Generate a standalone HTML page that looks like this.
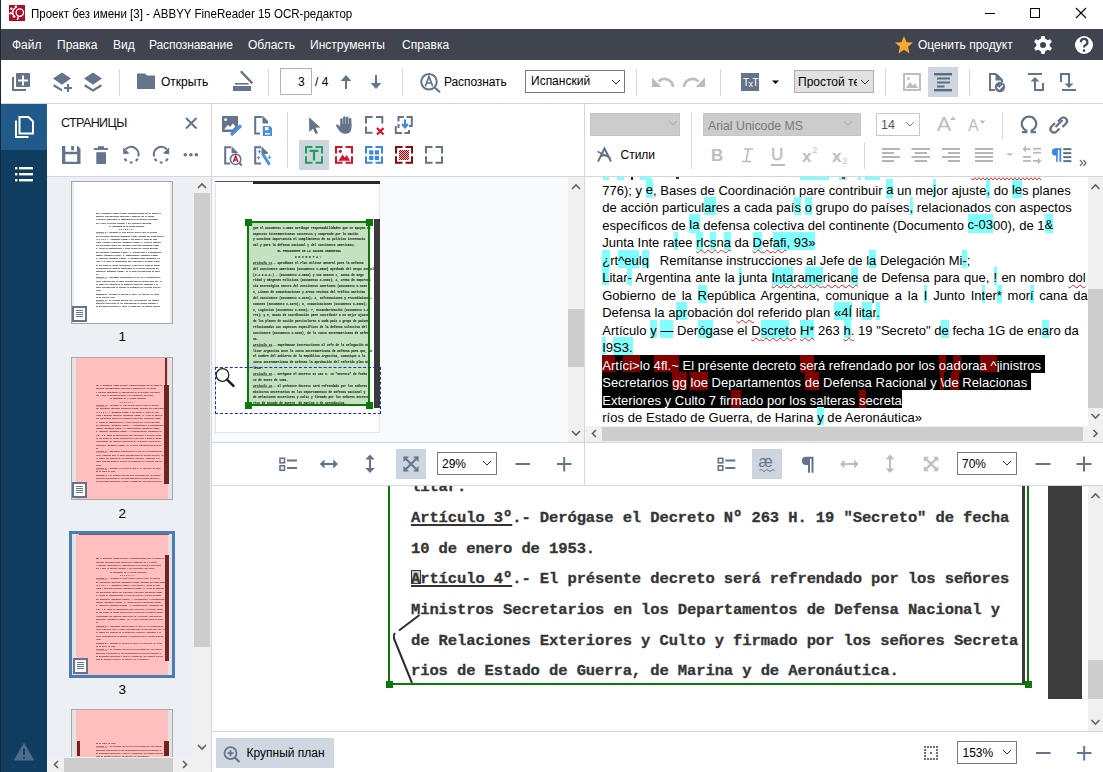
<!DOCTYPE html>
<html><head><meta charset="utf-8">
<style>
*{margin:0;padding:0;box-sizing:border-box}
html,body{width:1103px;height:772px;overflow:hidden;background:#fff;font-family:"Liberation Sans",sans-serif;color:#000}
.a{position:absolute}
.t{position:absolute;white-space:pre;line-height:1}
svg{position:absolute;overflow:visible}
.hl{background:#80ffff}
.dr{background:#800000}
.tl{position:absolute;white-space:pre;font-size:13px;line-height:17.53px;color:#000}
.tl span.hl,.tl span.dr,.tl span.bk{padding:3.1px 0 0 0}
.bk{background:#000;color:#fff}
.sq{text-decoration:underline wavy #e02020;text-decoration-thickness:0.5px;text-underline-offset:1.5px}
.sqc{text-decoration:underline wavy #30c0e0;text-decoration-thickness:0.5px;text-underline-offset:1.5px}
.doc{position:absolute;font-family:"Liberation Mono",monospace;font-weight:bold;font-size:15.5px;letter-spacing:-0.1px;color:#353535;-webkit-text-stroke:0.3px currentColor;width:700px;height:960px}
.dl{position:absolute;left:0;white-space:pre;line-height:30.7px}
.doc u{text-decoration-thickness:1.5px;text-underline-offset:2px}
</style></head><body>
<!-- window left border -->
<div class="a" style="left:0;top:0;width:1px;height:772px;background:#16283a"></div>

<!-- TITLE BAR -->

<div class="t" style="left:31px;top:7.5px;font-size:12.4px;transform:scaleX(0.93);transform-origin:0 0">Проект без имени [3] - ABBYY FineReader 15 OCR-редактор</div>

<!-- MENU BAR -->
<div class="a" style="left:1px;top:29px;width:1102px;height:31px;background:#40444f"></div>
<div class="t" style="left:12px;top:39px;font-size:12px;color:#fff">Файл</div>
<div class="t" style="left:57px;top:39px;font-size:12px;color:#fff">Правка</div>
<div class="t" style="left:113px;top:39px;font-size:12px;color:#fff">Вид</div>
<div class="t" style="left:149px;top:39px;font-size:12px;color:#fff;letter-spacing:-0.1px">Распознавание</div>
<div class="t" style="left:248px;top:39px;font-size:12px;color:#fff">Область</div>
<div class="t" style="left:310px;top:39px;font-size:12px;color:#fff">Инструменты</div>
<div class="t" style="left:402px;top:39px;font-size:12px;color:#fff">Справка</div>
<div class="t" style="left:918px;top:39px;font-size:12px;color:#fff">Оценить продукт</div>


<!-- TOOLBAR -->
<div class="a" style="left:1px;top:103px;width:1102px;height:1px;background:#cfd8e1"></div>

<!-- SIDEBAR -->
<div class="a" style="left:1px;top:104px;width:46px;height:668px;background:#0f3d5f"></div>
<div class="a" style="left:1px;top:104px;width:46px;height:46px;background:#1f5a8a"></div>

<!-- PAGES PANEL -->
<div class="a" style="left:47px;top:177px;width:164px;height:595px;background:#eceff3"></div>
<div class="a" style="left:47px;top:176px;width:164px;height:1px;background:#cfd8e1"></div>
<div class="a" style="left:211px;top:104px;width:1px;height:668px;background:#cfd8e1"></div>

<!-- pages panel header -->
<div class="t" style="left:61px;top:117px;font-size:12.5px;letter-spacing:-0.6px;color:#111">СТРАНИЦЫ</div>
<!-- thumbnails -->
<div class="a" style="left:71px;top:181px;width:102px;height:143px;border:1px solid #a8a8a8;background:#fff;overflow:hidden"><div class="a" style="left:0;top:0;width:2px;height:100%;background:#ececec"></div><div class="a" style="right:0;top:0;width:2px;height:100%;background:#ececec"></div><div class="a" style="left:24px;top:30px;width:68px;height:97px;overflow:hidden;filter:blur(0.5px)"><div class="doc" style="left:0;top:0;transform:scale(0.105);transform-origin:0 0;color:#3a3a3a;-webkit-text-stroke:0.8px #3a3a3a"><div class="dl" style="top:0.0px">Que el Documento C-0500 atribuye responsabilidades que se apoyan en</div>
<div class="dl" style="top:30.7px">aspectos interamericanos concretos y comprende por la Nación</div>
<div class="dl" style="top:61.4px">y contiene importancia el cumplimiento de su política internacio</div>
<div class="dl" style="top:92.1px">nal y para la defensa nacional y del Continente Americano;</div>
<div class="dl" style="top:122.8px">              EL PRESIDENTE DE LA NACION ARGENTINA</div>
<div class="dl" style="top:153.5px">                        D E C R E T A :</div>
<div class="dl" style="top:184.2px"><u>Artículo 1º</u>.- Apruébase el Plan Militar General para la Defensa</div>
<div class="dl" style="top:214.9px">del Continente Americano (Documento C-0500) aprobado del Grupo Consulta</div>
<div class="dl" style="top:245.6px">(C.J.I.D.A.) - (Documento C-0500) y sus anexos 1, Zonas de Segu</div>
<div class="dl" style="top:276.3px">ridad y Márgenes Políticas (Documento C-0300); 2, Areas de Importan</div>
<div class="dl" style="top:307.0px">cia Estratégica Dentro del Continente Americano (Documento C-0300</div>
<div class="dl" style="top:337.7px">3, Líneas de Comunicaciones y Areas Vecinas del Tráfico Marítimo</div>
<div class="dl" style="top:368.4px">del Continente (Documento C-0270); 4, Informaciones y Procedimiento-</div>
<div class="dl" style="top:399.1px">comunes (Documento C-0270); 5, Comunicaciones (Documento C-0300);</div>
<div class="dl" style="top:429.8px">6, Logística (Documento C-0300); 7, Estandarización (Documento C-0</div>
<div class="dl" style="top:460.5px">776); y 8, Bases de Coordinación pare contribuir a un mejor ajuste</div>
<div class="dl" style="top:491.2px">de los planes de acción particulares a cada país o grupo de países</div>
<div class="dl" style="top:521.9px">relacionados con aspectos específicos de la defensa colectiva del</div>
<div class="dl" style="top:552.6px">continente (Documento C-0300), de la Junta Interamericana de Defen</div>
<div class="dl" style="top:583.3px">sa.</div>
<div class="dl" style="top:614.0px"><u>Artículo 2º</u>.- Imprímanse instrucciones al Jefe de la Delegación Mi-</div>
<div class="dl" style="top:644.7px">litar Argentina ante la Junta Interamericana de Defensa para que, en</div>
<div class="dl" style="top:675.4px">el nombre del Gobierno de la República Argentina, comunique a la</div>
<div class="dl" style="top:706.1px">Junta Interamericana de Defensa la aprobación del referido plan mi-</div>
<div class="dl" style="top:736.8px">litar.</div>
<div class="dl" style="top:767.5px"><u>Artículo 3º</u>.- Derógase el Decreto Nº 263 H. 19 &quot;Secreto&quot; de fecha</div>
<div class="dl" style="top:798.2px">10 de enero de 1953.</div>
<div class="dl" style="top:828.9px"><u>Artículo 4º</u>.- El présente decreto será refrendado por los señores</div>
<div class="dl" style="top:859.6px">Ministros Secretarios en los Departamentos de Defensa Nacional y</div>
<div class="dl" style="top:890.3px">de Relaciones Exteriores y Culto y firmado por los señores Secreta</div>
<div class="dl" style="top:921.0px">rios de Estado de Guerra, de Marina y de Aeronáutica.</div></div></div></div><div class="a" style="left:72px;top:306px;width:15px;height:16px;background:#64748a"><div class="a" style="left:2px;top:2px;width:11px;height:12px;background:#fff"></div><div class="a" style="left:4px;top:4px;width:7px;height:1px;background:#64748a;box-shadow:0 2px 0 #64748a,0 4px 0 #64748a,0 6px 0 #64748a"></div></div>
<div class="t" style="left:118.5px;top:330.3px;font-size:13.5px">1</div>
<div class="a" style="left:71px;top:357px;width:102px;height:143px;border:1px solid #a8a8a8;background:#ffbfbf;overflow:hidden"><div class="a" style="left:0;top:0;width:4px;height:100%;background:#e3e3e3"></div><div class="a" style="right:0;top:0;width:4px;height:100%;background:#e3e3e3"></div><div class="a" style="left:24px;top:26px;width:68px;height:101px;overflow:hidden;filter:blur(0.2px)"><div class="doc" style="left:0;top:0;transform:scale(0.108);transform-origin:0 0;color:#6a2020;-webkit-text-stroke:0.3px #6a2020"><div class="dl" style="top:0.0px">Que el Documento C-0500 atribuye responsabilidades que se apoyan en</div>
<div class="dl" style="top:30.7px">aspectos interamericanos concretos y comprende por la Nación</div>
<div class="dl" style="top:61.4px">y contiene importancia el cumplimiento de su política internacio</div>
<div class="dl" style="top:92.1px">nal y para la defensa nacional y del Continente Americano;</div>
<div class="dl" style="top:122.8px">              EL PRESIDENTE DE LA NACION ARGENTINA</div>
<div class="dl" style="top:153.5px">                        D E C R E T A :</div>
<div class="dl" style="top:184.2px"><u>Artículo 1º</u>.- Apruébase el Plan Militar General para la Defensa</div>
<div class="dl" style="top:214.9px">del Continente Americano (Documento C-0500) aprobado del Grupo Consulta</div>
<div class="dl" style="top:245.6px">(C.J.I.D.A.) - (Documento C-0500) y sus anexos 1, Zonas de Segu</div>
<div class="dl" style="top:276.3px">ridad y Márgenes Políticas (Documento C-0300); 2, Areas de Importan</div>
<div class="dl" style="top:307.0px">cia Estratégica Dentro del Continente Americano (Documento C-0300</div>
<div class="dl" style="top:337.7px">3, Líneas de Comunicaciones y Areas Vecinas del Tráfico Marítimo</div>
<div class="dl" style="top:368.4px">del Continente (Documento C-0270); 4, Informaciones y Procedimiento-</div>
<div class="dl" style="top:399.1px">comunes (Documento C-0270); 5, Comunicaciones (Documento C-0300);</div>
<div class="dl" style="top:429.8px">6, Logística (Documento C-0300); 7, Estandarización (Documento C-0</div>
<div class="dl" style="top:460.5px">776); y 8, Bases de Coordinación pare contribuir a un mejor ajuste</div>
<div class="dl" style="top:491.2px">de los planes de acción particulares a cada país o grupo de países</div>
<div class="dl" style="top:521.9px">relacionados con aspectos específicos de la defensa colectiva del</div>
<div class="dl" style="top:552.6px">continente (Documento C-0300), de la Junta Interamericana de Defen</div>
<div class="dl" style="top:583.3px">sa.</div>
<div class="dl" style="top:614.0px"><u>Artículo 2º</u>.- Imprímanse instrucciones al Jefe de la Delegación Mi-</div>
<div class="dl" style="top:644.7px">litar Argentina ante la Junta Interamericana de Defensa para que, en</div>
<div class="dl" style="top:675.4px">el nombre del Gobierno de la República Argentina, comunique a la</div>
<div class="dl" style="top:706.1px">Junta Interamericana de Defensa la aprobación del referido plan mi-</div>
<div class="dl" style="top:736.8px">litar.</div>
<div class="dl" style="top:767.5px"><u>Artículo 3º</u>.- Derógase el Decreto Nº 263 H. 19 &quot;Secreto&quot; de fecha</div>
<div class="dl" style="top:798.2px">10 de enero de 1953.</div>
<div class="dl" style="top:828.9px"><u>Artículo 4º</u>.- El présente decreto será refrendado por los señores</div>
<div class="dl" style="top:859.6px">Ministros Secretarios en los Departamentos de Defensa Nacional y</div>
<div class="dl" style="top:890.3px">de Relaciones Exteriores y Culto y firmado por los señores Secreta</div>
<div class="dl" style="top:921.0px">rios de Estado de Guerra, de Marina y de Aeronáutica.</div></div></div><div class="a" style="left:93px;top:0;width:2px;height:27px;background:#7a2a2a"></div><div class="a" style="left:92px;top:27px;width:5px;height:99px;background:#6e2424"></div></div><div class="a" style="left:72px;top:482px;width:15px;height:16px;background:#64748a"><div class="a" style="left:2px;top:2px;width:11px;height:12px;background:#fff"></div><div class="a" style="left:4px;top:4px;width:7px;height:1px;background:#64748a;box-shadow:0 2px 0 #64748a,0 4px 0 #64748a,0 6px 0 #64748a"></div></div>
<div class="t" style="left:118.5px;top:507px;font-size:13.5px">2</div>
<div class="a" style="left:69px;top:531px;width:106px;height:147px;border:3px solid #4a7db8;background:#ffbfbf;overflow:hidden"><div class="a" style="left:0;top:0;width:4px;height:100%;background:#e3e3e3"></div><div class="a" style="right:0;top:0;width:4px;height:100%;background:#e3e3e3"></div><div class="a" style="left:7px;top:0;width:90px;height:1px;background:#a05050"></div><div class="a" style="left:24px;top:23px;width:69px;height:104px;overflow:hidden;filter:blur(0.2px)"><div class="doc" style="left:0;top:0;transform:scale(0.11);transform-origin:0 0;color:#6a2020;-webkit-text-stroke:0.3px #6a2020"><div class="dl" style="top:0.0px">Que el Documento C-0500 atribuye responsabilidades que se apoyan en</div>
<div class="dl" style="top:30.7px">aspectos interamericanos concretos y comprende por la Nación</div>
<div class="dl" style="top:61.4px">y contiene importancia el cumplimiento de su política internacio</div>
<div class="dl" style="top:92.1px">nal y para la defensa nacional y del Continente Americano;</div>
<div class="dl" style="top:122.8px">              EL PRESIDENTE DE LA NACION ARGENTINA</div>
<div class="dl" style="top:153.5px">                        D E C R E T A :</div>
<div class="dl" style="top:184.2px"><u>Artículo 1º</u>.- Apruébase el Plan Militar General para la Defensa</div>
<div class="dl" style="top:214.9px">del Continente Americano (Documento C-0500) aprobado del Grupo Consulta</div>
<div class="dl" style="top:245.6px">(C.J.I.D.A.) - (Documento C-0500) y sus anexos 1, Zonas de Segu</div>
<div class="dl" style="top:276.3px">ridad y Márgenes Políticas (Documento C-0300); 2, Areas de Importan</div>
<div class="dl" style="top:307.0px">cia Estratégica Dentro del Continente Americano (Documento C-0300</div>
<div class="dl" style="top:337.7px">3, Líneas de Comunicaciones y Areas Vecinas del Tráfico Marítimo</div>
<div class="dl" style="top:368.4px">del Continente (Documento C-0270); 4, Informaciones y Procedimiento-</div>
<div class="dl" style="top:399.1px">comunes (Documento C-0270); 5, Comunicaciones (Documento C-0300);</div>
<div class="dl" style="top:429.8px">6, Logística (Documento C-0300); 7, Estandarización (Documento C-0</div>
<div class="dl" style="top:460.5px">776); y 8, Bases de Coordinación pare contribuir a un mejor ajuste</div>
<div class="dl" style="top:491.2px">de los planes de acción particulares a cada país o grupo de países</div>
<div class="dl" style="top:521.9px">relacionados con aspectos específicos de la defensa colectiva del</div>
<div class="dl" style="top:552.6px">continente (Documento C-0300), de la Junta Interamericana de Defen</div>
<div class="dl" style="top:583.3px">sa.</div>
<div class="dl" style="top:614.0px"><u>Artículo 2º</u>.- Imprímanse instrucciones al Jefe de la Delegación Mi-</div>
<div class="dl" style="top:644.7px">litar Argentina ante la Junta Interamericana de Defensa para que, en</div>
<div class="dl" style="top:675.4px">el nombre del Gobierno de la República Argentina, comunique a la</div>
<div class="dl" style="top:706.1px">Junta Interamericana de Defensa la aprobación del referido plan mi-</div>
<div class="dl" style="top:736.8px">litar.</div>
<div class="dl" style="top:767.5px"><u>Artículo 3º</u>.- Derógase el Decreto Nº 263 H. 19 &quot;Secreto&quot; de fecha</div>
<div class="dl" style="top:798.2px">10 de enero de 1953.</div>
<div class="dl" style="top:828.9px"><u>Artículo 4º</u>.- El présente decreto será refrendado por los señores</div>
<div class="dl" style="top:859.6px">Ministros Secretarios en los Departamentos de Defensa Nacional y</div>
<div class="dl" style="top:890.3px">de Relaciones Exteriores y Culto y firmado por los señores Secreta</div>
<div class="dl" style="top:921.0px">rios de Estado de Guerra, de Marina y de Aeronáutica.</div></div></div><div class="a" style="left:93px;top:21px;width:4px;height:106px;background:#6e2424"></div></div><div class="a" style="left:73px;top:658px;width:15px;height:16px;background:#64748a"><div class="a" style="left:2px;top:2px;width:11px;height:12px;background:#fff"></div><div class="a" style="left:4px;top:4px;width:7px;height:1px;background:#64748a;box-shadow:0 2px 0 #64748a,0 4px 0 #64748a,0 6px 0 #64748a"></div></div>
<div class="t" style="left:118.5px;top:682.5px;font-size:13.5px">3</div>
<div class="a" style="left:71px;top:709px;width:102px;height:60px;border:1px solid #a8a8a8;background:#ffbfbf;overflow:hidden"><div class="a" style="left:0;top:0;width:4px;height:100%;background:#e3e3e3"></div><div class="a" style="right:0;top:0;width:4px;height:100%;background:#e3e3e3"></div><div class="a" style="left:24px;top:33px;width:68px;height:14px;overflow:hidden;filter:blur(0.2px)"><div class="doc" style="left:0;top:-89px;transform:scale(0.11);transform-origin:0 0;color:#6a2020;-webkit-text-stroke:0.3px #6a2020"><div class="dl" style="top:0.0px">Que el Documento C-0500 atribuye responsabilidades que se apoyan en</div>
<div class="dl" style="top:30.7px">aspectos interamericanos concretos y comprende por la Nación</div>
<div class="dl" style="top:61.4px">y contiene importancia el cumplimiento de su política internacio</div>
<div class="dl" style="top:92.1px">nal y para la defensa nacional y del Continente Americano;</div>
<div class="dl" style="top:122.8px">              EL PRESIDENTE DE LA NACION ARGENTINA</div>
<div class="dl" style="top:153.5px">                        D E C R E T A :</div>
<div class="dl" style="top:184.2px"><u>Artículo 1º</u>.- Apruébase el Plan Militar General para la Defensa</div>
<div class="dl" style="top:214.9px">del Continente Americano (Documento C-0500) aprobado del Grupo Consulta</div>
<div class="dl" style="top:245.6px">(C.J.I.D.A.) - (Documento C-0500) y sus anexos 1, Zonas de Segu</div>
<div class="dl" style="top:276.3px">ridad y Márgenes Políticas (Documento C-0300); 2, Areas de Importan</div>
<div class="dl" style="top:307.0px">cia Estratégica Dentro del Continente Americano (Documento C-0300</div>
<div class="dl" style="top:337.7px">3, Líneas de Comunicaciones y Areas Vecinas del Tráfico Marítimo</div>
<div class="dl" style="top:368.4px">del Continente (Documento C-0270); 4, Informaciones y Procedimiento-</div>
<div class="dl" style="top:399.1px">comunes (Documento C-0270); 5, Comunicaciones (Documento C-0300);</div>
<div class="dl" style="top:429.8px">6, Logística (Documento C-0300); 7, Estandarización (Documento C-0</div>
<div class="dl" style="top:460.5px">776); y 8, Bases de Coordinación pare contribuir a un mejor ajuste</div>
<div class="dl" style="top:491.2px">de los planes de acción particulares a cada país o grupo de países</div>
<div class="dl" style="top:521.9px">relacionados con aspectos específicos de la defensa colectiva del</div>
<div class="dl" style="top:552.6px">continente (Documento C-0300), de la Junta Interamericana de Defen</div>
<div class="dl" style="top:583.3px">sa.</div>
<div class="dl" style="top:614.0px"><u>Artículo 2º</u>.- Imprímanse instrucciones al Jefe de la Delegación Mi-</div>
<div class="dl" style="top:644.7px">litar Argentina ante la Junta Interamericana de Defensa para que, en</div>
<div class="dl" style="top:675.4px">el nombre del Gobierno de la República Argentina, comunique a la</div>
<div class="dl" style="top:706.1px">Junta Interamericana de Defensa la aprobación del referido plan mi-</div>
<div class="dl" style="top:736.8px">litar.</div>
<div class="dl" style="top:767.5px"><u>Artículo 3º</u>.- Derógase el Decreto Nº 263 H. 19 &quot;Secreto&quot; de fecha</div>
<div class="dl" style="top:798.2px">10 de enero de 1953.</div>
<div class="dl" style="top:828.9px"><u>Artículo 4º</u>.- El présente decreto será refrendado por los señores</div>
<div class="dl" style="top:859.6px">Ministros Secretarios en los Departamentos de Defensa Nacional y</div>
<div class="dl" style="top:890.3px">de Relaciones Exteriores y Culto y firmado por los señores Secreta</div>
<div class="dl" style="top:921.0px">rios de Estado de Guerra, de Marina y de Aeronáutica.</div></div></div><div class="a" style="left:5px;top:31px;width:3px;height:15px;background:#6e2424"></div><div class="a" style="left:92px;top:31px;width:5px;height:15px;background:#6e2424"></div></div>
<!-- pages scrollbars -->
<div class="a" style="left:194px;top:177px;width:16px;height:580px;background:#f0f0f0"></div>
<div class="a" style="left:194px;top:193px;width:16px;height:454px;background:#cdcdcd"></div>
<div class="a" style="left:47px;top:757px;width:147px;height:15px;background:#f0f0f0"></div>
<div class="a" style="left:64px;top:758px;width:109px;height:14px;background:#cdcdcd"></div>
<div class="a" style="left:194px;top:757px;width:17px;height:15px;background:#f0f0f0"></div>
<!-- image panel -->
<div class="a" style="left:212px;top:176px;width:891px;height:1px;background:#cfd8e1"></div>
<div class="a" style="left:212px;top:177px;width:372px;height:265px;background:#f7f8fa"></div>
<div class="a" style="left:584px;top:104px;width:1px;height:381px;background:#cfd8e1"></div>
<!-- IMAGE VIEW -->
<div class="a" style="left:212px;top:177px;width:356px;height:265px;overflow:hidden;background:#f9fafc">
 <div class="a" style="left:3px;top:4px;width:165px;height:252px;background:#fff;border:1px solid #e2e4e8"></div>
 <div class="a" style="left:3px;top:4px;width:165px;height:3px;background:#2a2a2a"></div>
 <div class="a" style="left:3px;top:5px;width:38px;height:2px;background:#fff"></div><div class="a" style="left:3px;top:4px;width:38px;height:1px;background:#555"></div>
 <div class="a" style="left:36.5px;top:45px;width:121.5px;height:183.5px;background:#c4e1c0"></div>
 <div class="doc" style="left:41px;top:47.6px;transform:scale(0.1906);transform-origin:0 0;color:#2a3a2a;-webkit-text-stroke:0.6px #2a3a2a"><div class="dl" style="top:0.0px">Que el Documento C-0500 atribuye responsabilidades que se apoyan en</div>
<div class="dl" style="top:30.7px">aspectos interamericanos concretos y comprende por la Nación</div>
<div class="dl" style="top:61.4px">y contiene importancia el cumplimiento de su política internacio</div>
<div class="dl" style="top:92.1px">nal y para la defensa nacional y del Continente Americano;</div>
<div class="dl" style="top:122.8px">              EL PRESIDENTE DE LA NACION ARGENTINA</div>
<div class="dl" style="top:153.5px">                        D E C R E T A :</div>
<div class="dl" style="top:184.2px"><u>Artículo 1º</u>.- Apruébase el Plan Militar General para la Defensa</div>
<div class="dl" style="top:214.9px">del Continente Americano (Documento C-0500) aprobado del Grupo Consulta</div>
<div class="dl" style="top:245.6px">(C.J.I.D.A.) - (Documento C-0500) y sus anexos 1, Zonas de Segu</div>
<div class="dl" style="top:276.3px">ridad y Márgenes Políticas (Documento C-0300); 2, Areas de Importan</div>
<div class="dl" style="top:307.0px">cia Estratégica Dentro del Continente Americano (Documento C-0300</div>
<div class="dl" style="top:337.7px">3, Líneas de Comunicaciones y Areas Vecinas del Tráfico Marítimo</div>
<div class="dl" style="top:368.4px">del Continente (Documento C-0270); 4, Informaciones y Procedimiento-</div>
<div class="dl" style="top:399.1px">comunes (Documento C-0270); 5, Comunicaciones (Documento C-0300);</div>
<div class="dl" style="top:429.8px">6, Logística (Documento C-0300); 7, Estandarización (Documento C-0</div>
<div class="dl" style="top:460.5px">776); y 8, Bases de Coordinación pare contribuir a un mejor ajuste</div>
<div class="dl" style="top:491.2px">de los planes de acción particulares a cada país o grupo de países</div>
<div class="dl" style="top:521.9px">relacionados con aspectos específicos de la defensa colectiva del</div>
<div class="dl" style="top:552.6px">continente (Documento C-0300), de la Junta Interamericana de Defen</div>
<div class="dl" style="top:583.3px">sa.</div>
<div class="dl" style="top:614.0px"><u>Artículo 2º</u>.- Imprímanse instrucciones al Jefe de la Delegación Mi-</div>
<div class="dl" style="top:644.7px">litar Argentina ante la Junta Interamericana de Defensa para que, en</div>
<div class="dl" style="top:675.4px">el nombre del Gobierno de la República Argentina, comunique a la</div>
<div class="dl" style="top:706.1px">Junta Interamericana de Defensa la aprobación del referido plan mi-</div>
<div class="dl" style="top:736.8px">litar.</div>
<div class="dl" style="top:767.5px"><u>Artículo 3º</u>.- Derógase el Decreto Nº 263 H. 19 &quot;Secreto&quot; de fecha</div>
<div class="dl" style="top:798.2px">10 de enero de 1953.</div>
<div class="dl" style="top:828.9px"><u>Artículo 4º</u>.- El présente decreto será refrendado por los señores</div>
<div class="dl" style="top:859.6px">Ministros Secretarios en los Departamentos de Defensa Nacional y</div>
<div class="dl" style="top:890.3px">de Relaciones Exteriores y Culto y firmado por los señores Secreta</div>
<div class="dl" style="top:921.0px">rios de Estado de Guerra, de Marina y de Aeronáutica.</div></div>
 <div class="a" style="left:35px;top:44px;width:123px;height:184.5px;border:2px solid #0a7a0a"></div>
 <div class="a" style="left:33px;top:42px;width:7px;height:7px;background:#0a7a0a"></div>
 <div class="a" style="left:154px;top:42px;width:7px;height:7px;background:#0a7a0a"></div>
 <div class="a" style="left:33px;top:225px;width:7px;height:7px;background:#0a7a0a"></div>
 <div class="a" style="left:154px;top:225px;width:7px;height:7px;background:#0a7a0a"></div>
 <div class="a" style="left:162px;top:42px;width:6px;height:189px;background:#3a3a3a"></div>
 <div class="a" style="left:3px;top:190px;width:166px;height:47px;border:1.5px dashed #1030e0"></div>
</div>
<div class="a" style="left:568px;top:177px;width:16px;height:265px;background:#f0f0f0"></div>
<div class="a" style="left:568px;top:309px;width:16px;height:58px;background:#cdcdcd"></div>
<!-- ZOOM TOOLBARS -->
<div class="a" style="left:396px;top:449px;width:30px;height:30px;background:#cdd6e0"></div>
<div class="a" style="left:437px;top:452px;width:60px;height:23px;border:1px solid #7a7a7a;background:#fff"></div>
<div class="t" style="left:442px;top:458px;font-size:12px">29%</div>
<div class="a" style="left:752px;top:449px;width:30px;height:30px;background:#cdd6e0"></div>
<div class="a" style="left:957px;top:452px;width:60px;height:23px;border:1px solid #7a7a7a;background:#fff"></div>
<div class="t" style="left:962px;top:458px;font-size:12px">70%</div>
<!-- BOTTOM VIEW -->
<div class="a" style="left:212px;top:486px;width:876px;height:245px;overflow:hidden;background:#fff">
 <div class="a" style="left:199px;top:84px;width:10px;height:14px;background:#d8d480;border:1px solid #2a2ad0"></div>
 <div class="doc" style="left:199px;top:-750.7px"><div class="dl" style="top:0.0px">Que el Documento C-0500 atribuye responsabilidades que se apoyan en</div>
<div class="dl" style="top:30.7px">aspectos interamericanos concretos y comprende por la Nación</div>
<div class="dl" style="top:61.4px">y contiene importancia el cumplimiento de su política internacio</div>
<div class="dl" style="top:92.1px">nal y para la defensa nacional y del Continente Americano;</div>
<div class="dl" style="top:122.8px">              EL PRESIDENTE DE LA NACION ARGENTINA</div>
<div class="dl" style="top:153.5px">                        D E C R E T A :</div>
<div class="dl" style="top:184.2px"><u>Artículo 1º</u>.- Apruébase el Plan Militar General para la Defensa</div>
<div class="dl" style="top:214.9px">del Continente Americano (Documento C-0500) aprobado del Grupo Consulta</div>
<div class="dl" style="top:245.6px">(C.J.I.D.A.) - (Documento C-0500) y sus anexos 1, Zonas de Segu</div>
<div class="dl" style="top:276.3px">ridad y Márgenes Políticas (Documento C-0300); 2, Areas de Importan</div>
<div class="dl" style="top:307.0px">cia Estratégica Dentro del Continente Americano (Documento C-0300</div>
<div class="dl" style="top:337.7px">3, Líneas de Comunicaciones y Areas Vecinas del Tráfico Marítimo</div>
<div class="dl" style="top:368.4px">del Continente (Documento C-0270); 4, Informaciones y Procedimiento-</div>
<div class="dl" style="top:399.1px">comunes (Documento C-0270); 5, Comunicaciones (Documento C-0300);</div>
<div class="dl" style="top:429.8px">6, Logística (Documento C-0300); 7, Estandarización (Documento C-0</div>
<div class="dl" style="top:460.5px">776); y 8, Bases de Coordinación pare contribuir a un mejor ajuste</div>
<div class="dl" style="top:491.2px">de los planes de acción particulares a cada país o grupo de países</div>
<div class="dl" style="top:521.9px">relacionados con aspectos específicos de la defensa colectiva del</div>
<div class="dl" style="top:552.6px">continente (Documento C-0300), de la Junta Interamericana de Defen</div>
<div class="dl" style="top:583.3px">sa.</div>
<div class="dl" style="top:614.0px"><u>Artículo 2º</u>.- Imprímanse instrucciones al Jefe de la Delegación Mi-</div>
<div class="dl" style="top:644.7px">litar Argentina ante la Junta Interamericana de Defensa para que, en</div>
<div class="dl" style="top:675.4px">el nombre del Gobierno de la República Argentina, comunique a la</div>
<div class="dl" style="top:706.1px">Junta Interamericana de Defensa la aprobación del referido plan mi-</div>
<div class="dl" style="top:736.8px">litar.</div>
<div class="dl" style="top:767.5px"><u>Artículo 3º</u>.- Derógase el Decreto Nº 263 H. 19 &quot;Secreto&quot; de fecha</div>
<div class="dl" style="top:798.2px">10 de enero de 1953.</div>
<div class="dl" style="top:828.9px"><u>Artículo 4º</u>.- El présente decreto será refrendado por los señores</div>
<div class="dl" style="top:859.6px">Ministros Secretarios en los Departamentos de Defensa Nacional y</div>
<div class="dl" style="top:890.3px">de Relaciones Exteriores y Culto y firmado por los señores Secreta</div>
<div class="dl" style="top:921.0px">rios de Estado de Guerra, de Marina y de Aeronáutica.</div></div>
 <div class="a" style="left:176px;top:0;width:2px;height:199px;background:#0a7a0a"></div>
 <div class="a" style="left:815px;top:0;width:2px;height:199px;background:#0a7a0a"></div>
 <div class="a" style="left:176px;top:197px;width:641px;height:2px;background:#0a7a0a"></div>
 <div class="a" style="left:174px;top:195px;width:7px;height:7px;background:#0a7a0a"></div>
 <div class="a" style="left:813px;top:195px;width:7px;height:7px;background:#0a7a0a"></div>
 <div class="a" style="left:810px;top:0;width:2.5px;height:197px;background:#3c3c3c"></div>
 <div class="a" style="left:836px;top:0;width:34px;height:213px;background:#3c3c3c"></div>
</div>
<div class="a" style="left:1088px;top:486px;width:15px;height:245px;background:#f0f0f0"></div>
<div class="a" style="left:1088px;top:660px;width:15px;height:39px;background:#cdcdcd"></div>
<!-- BOTTOM TOOLBAR -->
<div class="a" style="left:216px;top:738px;width:118px;height:30px;background:#cfd7e0"></div>
<div class="t" style="left:246.5px;top:747px;font-size:12px">Крупный план</div>
<div class="a" style="left:957px;top:741px;width:60px;height:23px;border:1px solid #7a7a7a;background:#fff"></div>
<div class="t" style="left:962.5px;top:747px;font-size:12px">153%</div>
<!-- TEXT PANEL -->
<div class="a" style="left:585px;top:177px;width:503px;height:249px;overflow:hidden;background:#fff">
<div class="a" style="left:17.6px;top:0;width:6px;height:2.9px;background:#80ffff"></div>
<div class="a" style="left:31.8px;top:0;width:7.6px;height:2.9px;background:#80ffff"></div>
<div class="a" style="left:54.6px;top:0;width:11px;height:2.9px;background:#80ffff"></div>
<div class="a" style="left:214.5px;top:0;width:29.5px;height:2.9px;background:#80ffff"></div>
<div class="a" style="left:279.7px;top:0;width:15px;height:2.9px;background:#80ffff"></div><div class="a" style="left:254.4px;top:0;width:7.6px;height:2.9px;background:#80ffff"></div><div class="a" style="left:272.8px;top:0;width:3.7px;height:2.9px;background:#80ffff"></div><div class="a" style="left:46px;top:0;width:2px;height:2.5px;background:#222"></div><div class="a" style="left:91px;top:0;width:3px;height:2px;background:#333"></div><div class="a" style="left:257px;top:0;width:3px;height:2px;background:#c02020"></div>
<div class="tl" style="left:17.2px;top:4.50px;letter-spacing:0.029px;word-spacing:0px">776); y <span class="hl">e</span>, Bases de Coordinación pare contribuir <span class="hl">a</span> un me<span class="hl">j</span>or ajuste<span class="hl">,</span> do <span class="hl">le</span>s planes</div>
<div class="tl" style="left:17.2px;top:22.03px;letter-spacing:0.044px;word-spacing:0px">de acción particul<span class="hl">ar</span>es a cada paí<span class="hl">s</span> <span class="hl">o</span> grupo do países<span class="hl">,</span> relacionados con aspectos</div>
<div class="tl" style="left:17.2px;top:39.56px;letter-spacing:0.03px;word-spacing:0px">específicos de <span class="hl">la</span> defensa colectiva del continente (Documento <span class="hl">c-03</span>00), de 1<span class="hl">&amp;</span></div>
<div class="tl" style="left:17.2px;top:57.09px;letter-spacing:0px;word-spacing:0px">Junta Inte ra<span class="hl">t</span>ee <span class="sq"><span class="hl">rl</span>c<span class="hl">s</span>n<span class="hl">a</span></span> da <span class="sq"><span class="hl">D</span>ef<span class="hl">afi</span></span><span class="hl">, 93»</span></div>
<div class="tl" style="left:17.2px;top:74.62px;letter-spacing:0.013px;word-spacing:0px"><span class="hl">¿</span>rt<span class="hl">^eu</span>l<span class="hl">q</span>   Remítanse instrucciones al Jefe de l<span class="hl">a</span> Delegación Mi<span class="hl">-</span>;</div>
<div class="tl" style="left:17.2px;top:92.15px;letter-spacing:0.0px;word-spacing:0.61px"><span class="hl">L</span>itar<span class="hl">-</span> Argentina ante la <span class="hl">j</span>unta <span class="sq"><span class="hl">Inta</span>ra<span class="hl">me</span>rican<span class="hl">e</span></span> de Defensa para que, <span class="hl">!</span> en nombro <span class="sq">dol</span></div>
<div class="tl" style="left:17.2px;top:109.68px;letter-spacing:0.0px;word-spacing:2.16px">Gobierno de la <span class="hl">R</span>epública Argentina, comunique a la <span class="hl">I</span> Junto In<span class="hl">t</span>er<span class="hl">*</span> mor<span class="hl">í</span> cana da</div>
<div class="tl" style="left:17.2px;top:127.21px;letter-spacing:0.029px;word-spacing:0px">Defensa la a<span class="hl">pr</span>obación <span class="sq">dol</span> referido plan <span class="hl">«4Í</span> li<span class="hl">ta</span>r<span class="hl">.</span></div>
<div class="tl" style="left:17.2px;top:144.74px;letter-spacing:0.033px;word-spacing:0px">Artículo <span class="hl">y</span> <span class="hl">—</span> Der<span class="hl">óg</span>ase el <span class="sq">D<span class="hl">scret</span>o</span> <span class="sq"><span class="hl">H*</span></span> 263 <span class="sq"><span class="hl">h</span>.</span> 19 &quot;Secreto&quot; d<span class="hl">e</span> fecha 1G de en<span class="hl">a</span>ro da</div>
<div class="tl" style="left:17.2px;top:162.27px;letter-spacing:0px;word-spacing:0px"><span class="hl">I</span>9<span class="hl">S3.</span></div>
<div class="tl sel" style="left:17.2px;top:179.80px;letter-spacing:0.045px;word-spacing:0px"><span class="bk"><span class="dr">Ar</span>tí<span class="dr">ci&gt;</span>lo <span class="dr">4fl.~</span> El présente decreto <span class="dr">se</span>rá refrendado por los <span class="sqc"><span class="dr">o</span>a<span class="dr">d</span>ora</span><span class="dr">a ^</span>jinistros </span></div>
<div class="tl sel" style="left:17.2px;top:197.33px;letter-spacing:0.052px;word-spacing:0px"><span class="bk">Secretarios <span class="sqc"><span class="dr">gg</span></span> <span class="dr">loe</span> Departamentos <span class="dr">de</span> Defensa Racional y <span class="dr">\</span>d<span class="dr">e</span> Relacionas </span></div>
<div class="tl sel" style="left:17.2px;top:214.86px;letter-spacing:0.023px;word-spacing:0px"><span class="bk">Exteriores y Culto 7 fir<span class="dr">m</span>ado por los salteras <span class="dr">s</span>ecreta</span></div>
<div class="tl" style="left:17.2px;top:232.39px;letter-spacing:0.049px;word-spacing:0px">ríos de Estado de Guerra, de Harina <span class="hl">y</span> de Aeronáutica»</div>
</div>
<!-- text panel scrollbars -->
<div class="a" style="left:1088px;top:177px;width:15px;height:249px;background:#f0f0f0"></div>
<div class="a" style="left:1088px;top:289px;width:15px;height:119px;background:#cdcdcd"></div>
<div class="a" style="left:585px;top:426px;width:518px;height:16px;background:#f0f0f0"></div>
<div class="a" style="left:602px;top:427px;width:481px;height:14px;background:#cdcdcd"></div>
<div class="a" style="left:212px;top:442px;width:891px;height:1px;background:#cfd8e1"></div>
<div class="a" style="left:212px;top:485px;width:891px;height:1px;background:#cfd8e1"></div>
<div class="a" style="left:212px;top:731px;width:891px;height:1px;background:#cfd8e1"></div>

<!-- toolbar elements -->
<div class="a" style="left:280px;top:68px;width:32px;height:27px;border:1px solid #a9b5c1;background:#fff"></div>
<div class="t" style="left:298px;top:76px;font-size:12px">3</div>
<div class="t" style="left:315px;top:76px;font-size:12px">/ 4</div>
<div class="t" style="left:161px;top:76px;font-size:12px">Открыть</div>
<div class="t" style="left:444px;top:76px;font-size:12px;letter-spacing:-0.1px">Распознать</div>
<div class="a" style="left:525px;top:70px;width:100px;height:23px;border:1px solid #7a7a7a;background:#fff"></div>
<div class="t" style="left:531px;top:74.5px;font-size:12px">Испанский</div>
<div class="a" style="left:794px;top:70px;width:80px;height:23px;border:1px solid #adadad;background:#e1e1e1;overflow:hidden"><div class="t" style="left:3px;top:5px;font-size:12px;width:59px;overflow:hidden">Простой текст</div></div>
<div class="a" style="left:741px;top:73px;width:18px;height:18px;background:#64748a"></div>
<div class="t" style="left:743px;top:77.5px;font-size:10px;color:#fff">T</div><div class="t" style="left:748.5px;top:80px;font-size:9px;color:#fff">x</div><div class="t" style="left:752.5px;top:77.5px;font-size:10px;color:#fff">T</div>
<div class="a" style="left:928px;top:67px;width:30px;height:30px;background:#cdd6e0"></div>
<!-- image toolbar selected bg -->
<div class="a" style="left:299px;top:140px;width:30px;height:30px;background:#cdd6e0"></div>
<!-- text toolbar -->
<div class="a" style="left:590px;top:113px;width:90px;height:23px;background:#cccccc;border:1px solid #c4c4c4"></div>
<div class="a" style="left:703px;top:113px;width:158px;height:23px;background:#cccccc;border:1px solid #c4c4c4"></div>
<div class="t" style="left:708px;top:119.5px;font-size:12.3px;color:#7a7a7a">Arial Unicode MS</div>
<div class="a" style="left:876px;top:113px;width:44px;height:23px;background:#fff;border:1px solid #c9c9c9"></div>
<div class="t" style="left:881px;top:119px;font-size:12.5px;color:#555">14</div>
<div class="t" style="left:620.5px;top:149px;font-size:12px">Стили</div>
<div class="t" style="left:711px;top:147px;font-size:17px;font-weight:bold;color:#bdbdbd">B</div>
<div class="t" style="left:771px;top:146px;font-size:17px;color:#bdbdbd;-webkit-text-stroke:0.4px #bdbdbd">U</div><div class="a" style="left:771px;top:164px;width:14px;height:1.6px;background:#bdbdbd"></div>
<div class="t" style="left:802px;top:147.5px;font-size:17px;font-weight:bold;color:#bdbdbd">x</div>
<div class="t" style="left:812.5px;top:146px;font-size:8.5px;color:#bdbdbd">2</div>
<div class="t" style="left:832px;top:147.5px;font-size:17px;font-weight:bold;color:#bdbdbd">x</div>
<div class="t" style="left:842.5px;top:157px;font-size:8.5px;color:#bdbdbd">2</div>
<div class="t" style="left:937px;top:113px;font-size:21px;color:#bdbdbd">A</div>
<div class="t" style="left:968px;top:118px;font-size:16px;color:#bdbdbd">A</div>

<svg width="1103" height="772" style="left:0;top:0" viewBox="0 0 1103 772">
<!-- logo -->
<g transform="translate(9,5)">
<rect x="0" y="0" width="16" height="16" fill="#b00d25"/>
<circle cx="10.8" cy="7.6" r="3.7" fill="none" stroke="#fff" stroke-width="1.3"/>
<path d="M9.6 11 L8.3 15" stroke="#fff" stroke-width="1.4"/>
<path d="M6.4 2.9 A5.2 5.2 0 0 0 6.2 12" fill="none" stroke="#fff" stroke-width="1.5"/>
<circle cx="6.9" cy="1.8" r="1.2" fill="#fff"/><circle cx="2.3" cy="3.6" r="1.2" fill="#fff"/><circle cx="1.6" cy="8.2" r="1.2" fill="#fff"/><circle cx="4.9" cy="11.4" r="1.2" fill="#fff"/>
</g>
<!-- window controls -->
<path d="M985 13.5 H995" stroke="#000" stroke-width="1"/>
<rect x="1030.5" y="8.5" width="9" height="9" fill="none" stroke="#000" stroke-width="1"/>
<path d="M1076 8 L1086 18 M1086 8 L1076 18" stroke="#000" stroke-width="1.1"/>
<!-- star -->
<path d="M904 36 L906.6 42.3 L913 42.6 L908 46.8 L909.6 53.5 L904 49.8 L898.4 53.5 L900 46.8 L895 42.6 L901.4 42.3 Z" fill="#f7a932"/>
<!-- gear -->
<g transform="translate(1043,45)" fill="#fff">
<path d="M-1.6 -9 H1.6 L2.2 -6.2 A6.5 6.5 0 0 1 4.6 -4.8 L7.3 -5.8 L8.9 -3 L6.7 -1.2 A6.5 6.5 0 0 1 6.7 1.2 L8.9 3 L7.3 5.8 L4.6 4.8 A6.5 6.5 0 0 1 2.2 6.2 L1.6 9 H-1.6 L-2.2 6.2 A6.5 6.5 0 0 1 -4.6 4.8 L-7.3 5.8 L-8.9 3 L-6.7 1.2 A6.5 6.5 0 0 1 -6.7 -1.2 L-8.9 -3 L-7.3 -5.8 L-4.6 -4.8 A6.5 6.5 0 0 1 -2.2 -6.2 Z M0 -3 A3 3 0 1 0 0 3 A3 3 0 1 0 0 -3 Z" fill-rule="evenodd"/>
</g>
<!-- help -->
<circle cx="1084" cy="45" r="9" fill="#fff"/>
<path d="M1080.8 42.2 A3.3 3.3 0 1 1 1085.3 45.2 Q1084 45.9 1084 47.6" fill="none" stroke="#40444f" stroke-width="2.2"/>
<circle cx="1084" cy="50.6" r="1.3" fill="#40444f"/>

<!-- sidebar icons -->
<path d="M19.5 117 H28.5 L33 121.5 V133.5 H19.5 Z" fill="none" stroke="#fff" stroke-width="2"/>
<path d="M16 120.5 V137 H28.5" fill="none" stroke="#fff" stroke-width="2"/>
<g fill="#fff"><rect x="15" y="167" width="2.4" height="2.4"/><rect x="19" y="167" width="14" height="2.4"/><rect x="15" y="173" width="2.4" height="2.4"/><rect x="19" y="173" width="14" height="2.4"/><rect x="15" y="179" width="2.4" height="2.4"/><rect x="19" y="179" width="14" height="2.4"/></g>
<path d="M24 743.5 L33.5 760 H14.5 Z" fill="#4d6d8b" stroke="#4d6d8b" stroke-width="1" stroke-linejoin="round"/>
<path d="M24 749 V755" stroke="#0f3d5f" stroke-width="2"/><circle cx="24" cy="757.6" r="1.1" fill="#0f3d5f"/>
<!-- pages header icons -->
<path d="M186 118 L196.5 128.5 M196.5 118 L186 128.5" stroke="#64748a" stroke-width="2"/>
<path d="M62 146 H65.3 V151.8 H77 V146 H77.8 L80.5 148.8 V164 H62 Z M65.3 154.3 V161.8 H77.2 V154.3 Z" fill="#64748a" fill-rule="evenodd"/>
<rect x="71.2" y="146" width="2.8" height="4.3" fill="#64748a"/>
<rect x="93.8" y="148" width="14.2" height="1.9" fill="#64748a"/><rect x="98" y="146.2" width="6" height="2" fill="#64748a"/>
<path d="M96.3 152.2 H106 V164 H96.3 Z" fill="#64748a"/>
<path d="M125.6 149.3 A7.5 7.5 0 0 1 138.3 156.5" fill="none" stroke="#64748a" stroke-width="2.1"/>
<path d="M124.5 158.8 L126.6 161 M129.8 162.5 H132.6 M135.8 161 L137.8 158.8" stroke="#64748a" stroke-width="2.1"/>
<path d="M123.2 147.4 V154.2 L129.6 153.4 Z" fill="#64748a"/>
<path d="M166.8 149.3 A7.5 7.5 0 0 0 154.1 156.5" fill="none" stroke="#64748a" stroke-width="2.1"/>
<path d="M167.9 158.8 L165.8 161 M162.6 162.5 H159.8 M156.6 161 L154.6 158.8" stroke="#64748a" stroke-width="2.1"/>
<path d="M169.2 147.4 V154.2 L162.8 153.4 Z" fill="#64748a"/>
<circle cx="185.3" cy="154.8" r="1.8" fill="#64748a"/><circle cx="190.9" cy="154.8" r="1.8" fill="#64748a"/><circle cx="196.4" cy="154.8" r="1.8" fill="#64748a"/>
<!-- scroll arrows -->
<path d="M198 188 L202 184 L206 188" fill="none" stroke="#606060" stroke-width="1.6"/>
<path d="M198 745 L202 749 L206 745" fill="none" stroke="#606060" stroke-width="1.6"/>
<path d="M58 761 L54.5 764.5 L58 768" fill="none" stroke="#606060" stroke-width="1.6"/>
<path d="M183 761 L186.5 764.5 L183 768" fill="none" stroke="#606060" stroke-width="1.6"/>
<!-- IMAGE TOOLBAR ICONS -->
<rect x="287" y="112" width="1" height="56" fill="#d0d9e2"/>
<rect x="691" y="112" width="1" height="57" fill="#d0d9e2"/>
<rect x="1002" y="112" width="1" height="27" fill="#d0d9e2"/>
<rect x="864" y="142" width="1" height="27" fill="#d0d9e2"/>
<!-- image edit -->
<path d="M222 116 H238 V128 L234 132 H222 Z" fill="#64748a"/>
<circle cx="225.6" cy="119.7" r="1.4" fill="#fff"/>
<path d="M224 129.5 L228 125 L230 127 L233 123.5 L235.5 126.5 L232.5 129.5 Z" fill="#fff"/>
<path d="M231 135 L241 125.5" stroke="#4a8fe0" stroke-width="3.2"/>
<!-- doc save -->
<path d="M262 117 H255.2 V133.5 H260" fill="none" stroke="#64748a" stroke-width="2"/>
<path d="M262.5 116 H263 L268 121 V123.5 H262.5 Z" fill="#64748a"/>
<path d="M262.8 126 H270 L272 128 V136 H262.8 Z M265 127 V130.3 H268.5 V127 Z M265 133 V134.5 H270 V133 Z" fill="#4a8fe0" fill-rule="evenodd"/>
<!-- doc search A -->
<path d="M231 147.2 H225.2 V163.5 H230" fill="none" stroke="#64748a" stroke-width="2"/>
<path d="M231.5 146.2 L237.8 152.5 V153 H231.5 Z" fill="#64748a"/>
<circle cx="235.6" cy="159.3" r="5.2" fill="#fff" stroke="#64748a" stroke-width="1.6"/>
<path d="M239.4 163 L241.8 165.6" stroke="#64748a" stroke-width="2"/>
<path d="M233.3 162 L235.6 155.7 L237.9 162 M234 160 H237.2" fill="none" stroke="#d0142c" stroke-width="1.4"/>
<!-- doc magic -->
<path d="M261 147.2 H255.2 V163.5 H261" fill="none" stroke="#64748a" stroke-width="2"/>
<path d="M261.5 146.2 L267.8 152.5 V154 H261.5 Z" fill="#64748a"/>
<path d="M262.5 153.5 L269.5 164.8" stroke="#4a8fe0" stroke-width="3"/>
<path d="M259.5 150 V153.5 M257.8 151.7 H261.2 M258.5 156 V159.5 M256.8 157.7 H260.2 M269.5 155.5 V159 M267.8 157.3 H271.2" stroke="#4a8fe0" stroke-width="1"/>
<!-- arrow cursor -->
<path d="M309 117.3 L320.4 127.6 L315.5 127.8 L318 133 L315.5 134 L313 128.7 L309.3 132 Z" fill="#64748a"/>
<!-- hand -->
<g fill="#64748a"><rect x="340.2" y="118.3" width="2.5" height="10" rx="1.25"/><rect x="343.1" y="116.3" width="2.5" height="11" rx="1.25"/><rect x="346" y="116.6" width="2.5" height="11" rx="1.25"/><rect x="348.9" y="118" width="2.5" height="10" rx="1.25"/>
<path d="M340.2 124 H351.4 V128 Q351.4 133.7 346 133.7 H344.5 Q341.5 133.7 339.5 131 L336.2 126.3 Q335.6 125 336.8 124.6 Q338 124.3 339 125.5 L340.2 127 Z"/></g>
<!-- bracket icons -->
<defs><pattern id="chk" width="2" height="2" patternUnits="userSpaceOnUse"><rect width="2" height="2" fill="#e8c0c0"/><rect width="1" height="1" fill="#8b0a0a"/><rect x="1" y="1" width="1" height="1" fill="#8b0a0a"/></pattern></defs>
<g fill="none" stroke-width="2" stroke-linecap="butt">
<path d="M366 123.5 V117 H372.5 M376 117 H382.3 V123.5 M366 126.5 V132.8 H372.5" stroke="#64748a"/>
<path d="M398.5 121.5 V117 H404 M406.5 117 H411.8 V126 H409 M398.5 124 V128 M395.8 126 V133 H402 M404.5 133 H409 V130" stroke="#64748a"/>
<path d="M306 153.5 V147 H312.5 M315.5 147 H322 V153.5 M306 156.3 V162.8 H312.5 M322 156.3 V162.8 H315.5" stroke="#22a05a"/>
<path d="M336 153.5 V147 H342.5 M345.5 147 H352 V153.5 M336 156.3 V162.8 H342.5 M352 156.3 V162.8 H345.5" stroke="#d0142c"/>
<path d="M366 153.5 V147 H372.5 M375.5 147 H382 V153.5 M366 156.3 V162.8 H372.5 M382 156.3 V162.8 H375.5" stroke="#3b88dc"/>
<path d="M396 153.5 V147 H402.5 M405.5 147 H412 V153.5 M396 156.3 V162.8 H402.5 M412 156.3 V162.8 H405.5" stroke="#8b0a0a"/>
<path d="M426 153.5 V147 H432.5 M435.5 147 H442 V153.5 M426 156.3 V162.8 H432.5 M442 156.3 V162.8 H435.5" stroke="#64748a"/>
</g>
<path d="M377 128 L383.5 134.5 M383.5 128 L377 134.5" stroke="#d0142c" stroke-width="2.2"/>
<path d="M405 119.5 V126.5 M402 124 L405 127.5 L408 124" stroke="#3b88dc" stroke-width="2" fill="none"/>
<path d="M309.5 150.8 H318.5 M314 150.8 V160.5" stroke="#22a05a" stroke-width="2.2"/>
<circle cx="340.3" cy="151.3" r="1.6" fill="#d0142c"/>
<path d="M338.5 160.8 L342.5 154.5 L344.8 157.5 L346.8 155 L350 160.8 Z" fill="#d0142c"/>
<g fill="#3b88dc"><rect x="369.2" y="150.3" width="4.2" height="4.2"/><rect x="374.8" y="150.3" width="4.2" height="4.2"/><rect x="369.2" y="155.9" width="4.2" height="4.2"/><rect x="374.8" y="155.9" width="4.2" height="4.2"/></g>
<rect x="399" y="150" width="10" height="10" fill="url(#chk)"/>
<!-- text toolbar icons -->
<path d="M677 121 L673 125 L669 121" fill="none" stroke="#aaa" stroke-width="1"/>
<path d="M852 121 L848 125 L844 121" fill="none" stroke="#aaa" stroke-width="1"/>
<path d="M914 122 L910 126 L906 122" fill="none" stroke="#888" stroke-width="1"/>
<path d="M598 161.5 L604.5 148.5 L611 161.5 M600.5 156.5 Q604 154 609 157" fill="none" stroke="#64748a" stroke-width="2"/>
<path d="M597.5 151.5 L610.5 158" stroke="#64748a" stroke-width="1.5"/>
<path d="M744 149 H753 M742 161.5 H751 M748.5 149 L746 161.5" stroke="#bdbdbd" stroke-width="1.6"/>
<path d="M950 120 L953 116.5 L956 120 Z" fill="#bdbdbd"/>
<path d="M979.5 120.5 L982.5 124 L985.5 120.5 Z" fill="#bdbdbd"/>
<!-- link -->
<g fill="none" stroke="#64748a" stroke-width="2.3">
<path d="M1058 121.5 L1061 118.5 Q1063.5 116.2 1066 118.5 Q1068.3 121 1066 123.5 L1062.5 127"/>
<path d="M1059.5 128.5 L1056.5 131.5 Q1054 133.8 1051.5 131.5 Q1049.2 129 1051.5 126.5 L1055 123"/>
<path d="M1055.5 127 L1062.5 120"/>
</g>
<!-- align icons -->
<g fill="#b5b5b5">
<rect x="882" y="148" width="18" height="2"/><rect x="882" y="152" width="12" height="2"/><rect x="882" y="156" width="18" height="2"/><rect x="882" y="160" width="12" height="2"/>
<rect x="911.5" y="148" width="18.5" height="2"/><rect x="914.5" y="152" width="12.5" height="2"/><rect x="911.5" y="156" width="18.5" height="2"/><rect x="914.5" y="160" width="12.5" height="2"/>
<rect x="942" y="148" width="18" height="2"/><rect x="948" y="152" width="12" height="2"/><rect x="942" y="156" width="18" height="2"/><rect x="948" y="160" width="12" height="2"/>
<rect x="975" y="148" width="18" height="2"/><rect x="975" y="152" width="18" height="2"/><rect x="975" y="156" width="18" height="2"/><rect x="975" y="160" width="18" height="2"/>
</g>
<path d="M1006 153 H1013.5 L1009.8 156.5 Z" fill="#c5ccd5"/>
<!-- omega -->
<path d="M1022 132.2 H1026.3 V130.5 A7.2 7.2 0 1 1 1031.7 130.5 V132.2 H1036" fill="none" stroke="#64748a" stroke-width="2.2"/>
<!-- spacing -->
<g fill="#b8b8b8">
<path d="M1022.5 149 L1026 145.5 V152.5 Z"/><rect x="1025.5" y="148.2" width="5" height="1.8"/>
<rect x="1033" y="147.8" width="8" height="1.8"/><rect x="1033" y="151.8" width="8" height="1.8"/>
<rect x="1023" y="156" width="8" height="1.8"/><rect x="1023" y="160" width="8" height="1.8"/>
<path d="M1041.3 160.9 L1037.8 157.4 V164.4 Z"/><rect x="1033" y="160" width="5" height="1.8"/>
</g>
<!-- pilcrow lines -->
<path d="M1055.5 148.3 H1061.2 V150 H1057.6 V155.6 H1055.5 A3.65 3.65 0 0 1 1055.5 148.3 Z" fill="#3b88dc"/>
<rect x="1056.1" y="148.3" width="1.6" height="13.5" fill="#3b88dc"/><rect x="1059.4" y="148.3" width="1.8" height="13.5" fill="#3b88dc"/>
<g fill="#5a6a7e"><rect x="1063.3" y="148.2" width="8" height="1.9"/><rect x="1063.3" y="152.2" width="8" height="1.9"/><rect x="1063.3" y="156.2" width="8" height="1.9"/><rect x="1063.3" y="160.2" width="8" height="1.9"/></g>
<path d="M1080 160 L1082.6 163 L1080 166 M1083.4 160 L1086 163 L1083.4 166" fill="none" stroke="#64748a" stroke-width="1.3"/>
<!-- ZOOM TOOLBAR ICONS -->
<g fill="none" stroke="#64748a" stroke-width="1.6">
<rect x="280" y="458.3" width="4.5" height="4.5"/><rect x="280" y="465.8" width="4.5" height="4.5"/>
<rect x="718.3" y="458.3" width="4.5" height="4.5"/><rect x="718.3" y="465.8" width="4.5" height="4.5"/>
</g>
<g fill="#64748a"><rect x="287" y="459.5" width="10" height="2"/><rect x="287" y="467" width="10" height="2"/><rect x="725.3" y="459.5" width="10" height="2"/><rect x="725.3" y="467" width="10" height="2"/></g>
<path d="M322 464 H336" stroke="#64748a" stroke-width="2"/>
<path d="M319.7 464 L324.5 459.5 V468.5 Z M338 464 L333.2 459.5 V468.5 Z" fill="#64748a"/>
<path d="M370 457 V471" stroke="#64748a" stroke-width="2"/>
<path d="M370 454.6 L374.7 459.5 H365.3 Z M370 473 L374.7 468 H365.3 Z" fill="#64748a"/>
<path d="M404 457 L418 471 M418 457 L404 471" stroke="#64748a" stroke-width="2"/>
<path d="M403.5 456.5 H409 L403.5 462 Z M418.5 456.5 H413 L418.5 462 Z M403.5 471.5 H409 L403.5 466 Z M418.5 471.5 H413 L418.5 466 Z" fill="#64748a"/>
<path d="M483 461 L487 465 L491 461" fill="none" stroke="#333" stroke-width="1"/>
<path d="M515.5 464 H530" stroke="#64748a" stroke-width="2"/>
<path d="M557 464 H571.5 M564.2 457 V471.5" stroke="#64748a" stroke-width="2"/>
<!-- right zoom toolbar -->
<text x="758.5" y="466.5" font-family="Liberation Sans" font-size="16" fill="#64748a" letter-spacing="-1">æ</text>
<path d="M759.5 470.5 q1.5 -2 3 0 t3 0 t3 0 t3 0 t3 0" fill="none" stroke="#64748a" stroke-width="1"/>
<path d="M806 456.8 H813.5 V472.7 H811.5 V458.8 H810 V472.7 H808 V465 H806 A4.1 4.1 0 0 1 806 456.8 Z" fill="#64748a"/>
<path d="M842 464 H856.5" stroke="#bdbdbd" stroke-width="2"/>
<path d="M840 464 L844.5 459.5 V468.5 Z M858.5 464 L854 459.5 V468.5 Z" fill="#bdbdbd"/>
<path d="M890 457 V471" stroke="#bdbdbd" stroke-width="2"/>
<path d="M890 454.6 L894.3 459.3 H885.7 Z M890 473.1 L894.3 468.4 H885.7 Z" fill="#bdbdbd"/>
<path d="M924.5 457.5 L937.5 470.5 M937.5 457.5 L924.5 470.5" stroke="#bdbdbd" stroke-width="2"/>
<path d="M923.7 456.7 H929 L923.7 462 Z M938.2 456.7 H933 L938.2 462 Z M923.7 471.3 H929 L923.7 466 Z M938.2 471.3 H933 L938.2 466 Z" fill="#bdbdbd"/>
<path d="M1003 461 L1007 465 L1011 461" fill="none" stroke="#333" stroke-width="1"/>
<path d="M1035.5 464 H1050.5" stroke="#64748a" stroke-width="2"/>
<path d="M1076.5 464 H1091.5 M1084 456.5 V471.5" stroke="#64748a" stroke-width="2"/>
<!-- bottom toolbar icons -->
<circle cx="230.5" cy="753.2" r="6" fill="none" stroke="#64748a" stroke-width="1.8"/>
<path d="M234.8 757.5 L239.5 762" stroke="#64748a" stroke-width="2.2"/>
<path d="M227.5 753.2 H233.5 M230.5 750.2 V756.2" stroke="#64748a" stroke-width="1.8"/>
<g fill="#64748a"><rect x="924" y="746" width="2" height="2"/><rect x="924" y="758" width="2" height="2"/><rect x="927" y="746" width="2" height="2"/><rect x="927" y="758" width="2" height="2"/><rect x="930" y="746" width="2" height="2"/><rect x="930" y="758" width="2" height="2"/><rect x="933" y="746" width="2" height="2"/><rect x="933" y="758" width="2" height="2"/><rect x="936" y="746" width="2" height="2"/><rect x="936" y="758" width="2" height="2"/><rect x="924" y="749" width="2" height="2"/><rect x="936" y="749" width="2" height="2"/><rect x="924" y="752" width="2" height="2"/><rect x="936" y="752" width="2" height="2"/><rect x="924" y="755" width="2" height="2"/><rect x="936" y="755" width="2" height="2"/></g>
<rect x="930" y="752" width="2" height="2" fill="#64748a"/>
<path d="M1003 750 L1007 754 L1011 750" fill="none" stroke="#333" stroke-width="1"/>
<path d="M1036 753 H1050.5" stroke="#64748a" stroke-width="2"/>
<path d="M1077 753 H1091.5 M1084.2 746 V760.5" stroke="#64748a" stroke-width="2"/>
<!-- magnifier in preview -->
<circle cx="222.5" cy="375" r="6.3" fill="#fff" stroke="#222" stroke-width="1.3"/>
<path d="M227 379.5 L233.5 385.8" stroke="#222" stroke-width="2.4" stroke-linecap="round"/>
<path d="M227.8 380.8 L234 386.8" stroke="rgba(0,0,0,0.25)" stroke-width="2"/>
<!-- scroll arrows -->
<path d="M572 189 L576 185 L580 189" fill="none" stroke="#606060" stroke-width="1.6"/>
<path d="M572 431 L576 435 L580 431" fill="none" stroke="#606060" stroke-width="1.6"/>
<path d="M1091.5 189 L1095.5 185 L1099.5 189" fill="none" stroke="#606060" stroke-width="1.6"/>
<path d="M1091.5 414 L1095.5 418 L1099.5 414" fill="none" stroke="#606060" stroke-width="1.6"/>
<path d="M596 430 L592.5 433.5 L596 437" fill="none" stroke="#606060" stroke-width="1.6"/>
<path d="M1093.5 430 L1097 433.5 L1093.5 437" fill="none" stroke="#606060" stroke-width="1.6"/>
<path d="M1091.5 498 L1095.5 494 L1099.5 498" fill="none" stroke="#606060" stroke-width="1.6"/>
<path d="M1091.5 720 L1095.5 724 L1099.5 720" fill="none" stroke="#606060" stroke-width="1.6"/>
<path d="M971 178.5 L973 180 L975 177.6 L977 180 L979 177.6 L981 180 L983 177.6 L985 180 L987 177.6 L989 180 L991 177.6 L993 180 L995 177.6 L997 180 L999 177.6 L1001 180 L1003 177.6 L1005 180 L1007 177.6 L1009 180 L1011 177.6 L1013 180 L1015 177.6 L1017 180 L1019 177.6 L1021 180 L1023 177.6 L1025 180 L1027 177.6 L1029 180 L1031 177.6 L1033 180 L1035 177.6 L1037 180 L1039 177.6 L1041 180" fill="none" stroke="#e02020" stroke-width="0.9"/>
<!-- handwritten mark -->
<path d="M419.5 615 L399 630.5 M395 633 Q392.8 636 394.8 640.5 L412 683" fill="none" stroke="#2e2e2e" stroke-width="2"/>
<!-- TOOLBAR ICONS -->
<g fill="#64748a" stroke="none">
<!-- new doc plus -->
<rect x="16" y="73" width="14" height="14" rx="1"/>
<path d="M12 77 H14 V89 H26 V91 H12 Z"/>
<!-- layers plus -->
<path d="M62 72.5 L71 78.6 L62 84.8 L53 78.6 Z"/>
<path d="M53 86.2 L54.3 84.3 L62 89.3 V91.6 Z"/>
<!-- layers -->
<path d="M93 72.5 L102 78.6 L93 84.8 L84 78.6 Z"/>
<path d="M84 86.2 L85.3 84.3 L93 89.3 L100.7 84.3 L102 86.2 L93 91.8 Z"/>
<!-- folder -->
<path d="M137 73.5 H145 L147 75.5 H155 V89 H137 Z"/>
<!-- scanner -->
<rect x="233" y="86" width="18" height="5"/>
<rect x="235" y="83" width="13.5" height="1.6"/>
<!-- up/down -->
<path d="M346 75 L351.3 81 H347 V89 H345 V81 H340.7 Z"/>
<path d="M376 89 L381.3 83 H377 V75 H375 V83 H370.7 Z"/>
</g>
<path d="M64 87.9 H72 M68 83.9 V91.9" stroke="#64748a" stroke-width="2"/>
<path d="M18 80.5 H28 M23 75.5 V85.5" stroke="#fff" stroke-width="2"/>
<path d="M240.8 71.3 L252.4 83.4" stroke="#64748a" stroke-width="2.3"/>
<!-- recognize -->
<circle cx="429" cy="81.7" r="7.8" fill="none" stroke="#64748a" stroke-width="2"/>
<path d="M435 87.7 L440 92.3" stroke="#64748a" stroke-width="2.2"/>
<path d="M425.3 86.3 L429 76.5 L432.7 86.3 M426.6 83 H431.4" fill="none" stroke="#64748a" stroke-width="1.7"/>
<!-- separators -->
<g fill="#d0d9e2">
<rect x="119" y="69" width="1" height="27"/><rect x="268" y="69" width="1" height="27"/><rect x="402" y="69" width="1" height="27"/>
<rect x="636" y="69" width="1" height="27"/><rect x="720" y="69" width="1" height="27"/><rect x="885" y="69" width="1" height="27"/><rect x="969" y="69" width="1" height="27"/>
</g>
<!-- combo chevrons -->
<path d="M612 80 L616 84 L620 80" fill="none" stroke="#333" stroke-width="1"/>
<path d="M861 80 L865 84 L869 80" fill="none" stroke="#333" stroke-width="1"/>
<!-- undo/redo -->
<path d="M673 87 A8.5 8.5 0 0 0 658.5 81.5" fill="none" stroke="#bcbcbc" stroke-width="2.6"/>
<path d="M652 77.5 V87 H661.5 Z" fill="#bcbcbc"/>
<path d="M684 87 A8.5 8.5 0 0 1 698.5 81.5" fill="none" stroke="#bcbcbc" stroke-width="2.6"/>
<path d="M705 77.5 V87 H695.5 Z" fill="#bcbcbc"/>
<!-- dropdown tri -->
<path d="M772 80.5 H779 L775.5 84 Z" fill="#000"/>
<!-- image icon -->
<rect x="904" y="74" width="16" height="16" fill="none" stroke="#bdbdbd" stroke-width="2"/>
<circle cx="908.5" cy="78.5" r="1.4" fill="#bdbdbd"/>
<path d="M906 88 L910 82 L913 85.5 L915 83 L918 88 Z" fill="#bdbdbd"/>
<!-- text icon -->
<g fill="#5d6d80"><rect x="934" y="73" width="18" height="2.4"/><rect x="937" y="77.5" width="13" height="2"/><rect x="937" y="81.5" width="13" height="2"/><rect x="937" y="85.5" width="7.5" height="2"/><rect x="934" y="89" width="18" height="2.4"/></g>
<!-- doc check -->
<path d="M996 74 H990 V90 H995" fill="none" stroke="#64748a" stroke-width="2"/>
<path d="M996 74 L1002 80 V82" fill="none" stroke="#64748a" stroke-width="2"/>
<path d="M995.5 73 L1003 80.5 H995.5 Z" fill="#64748a"/>
<circle cx="1000" cy="87" r="5.2" fill="#64748a"/>
<path d="M997.3 87 L999.3 89 L1002.8 85.2" fill="none" stroke="#fff" stroke-width="1.5"/>
<!-- upload -->
<path d="M1028 74 H1042" stroke="#64748a" stroke-width="2"/>
<path d="M1035 77 L1039.5 81.5 H1030.5 Z" fill="#64748a"/>
<path d="M1035 81 V90 H1043 V83" fill="none" stroke="#64748a" stroke-width="2"/>
<!-- download -->
<path d="M1061 82 V74 H1069 V84" fill="none" stroke="#64748a" stroke-width="2"/>
<path d="M1064.5 83.5 H1073.5 L1069 88 Z" fill="#64748a"/>
<path d="M1062 90 H1076" stroke="#64748a" stroke-width="2"/>
</svg>
</body></html>
